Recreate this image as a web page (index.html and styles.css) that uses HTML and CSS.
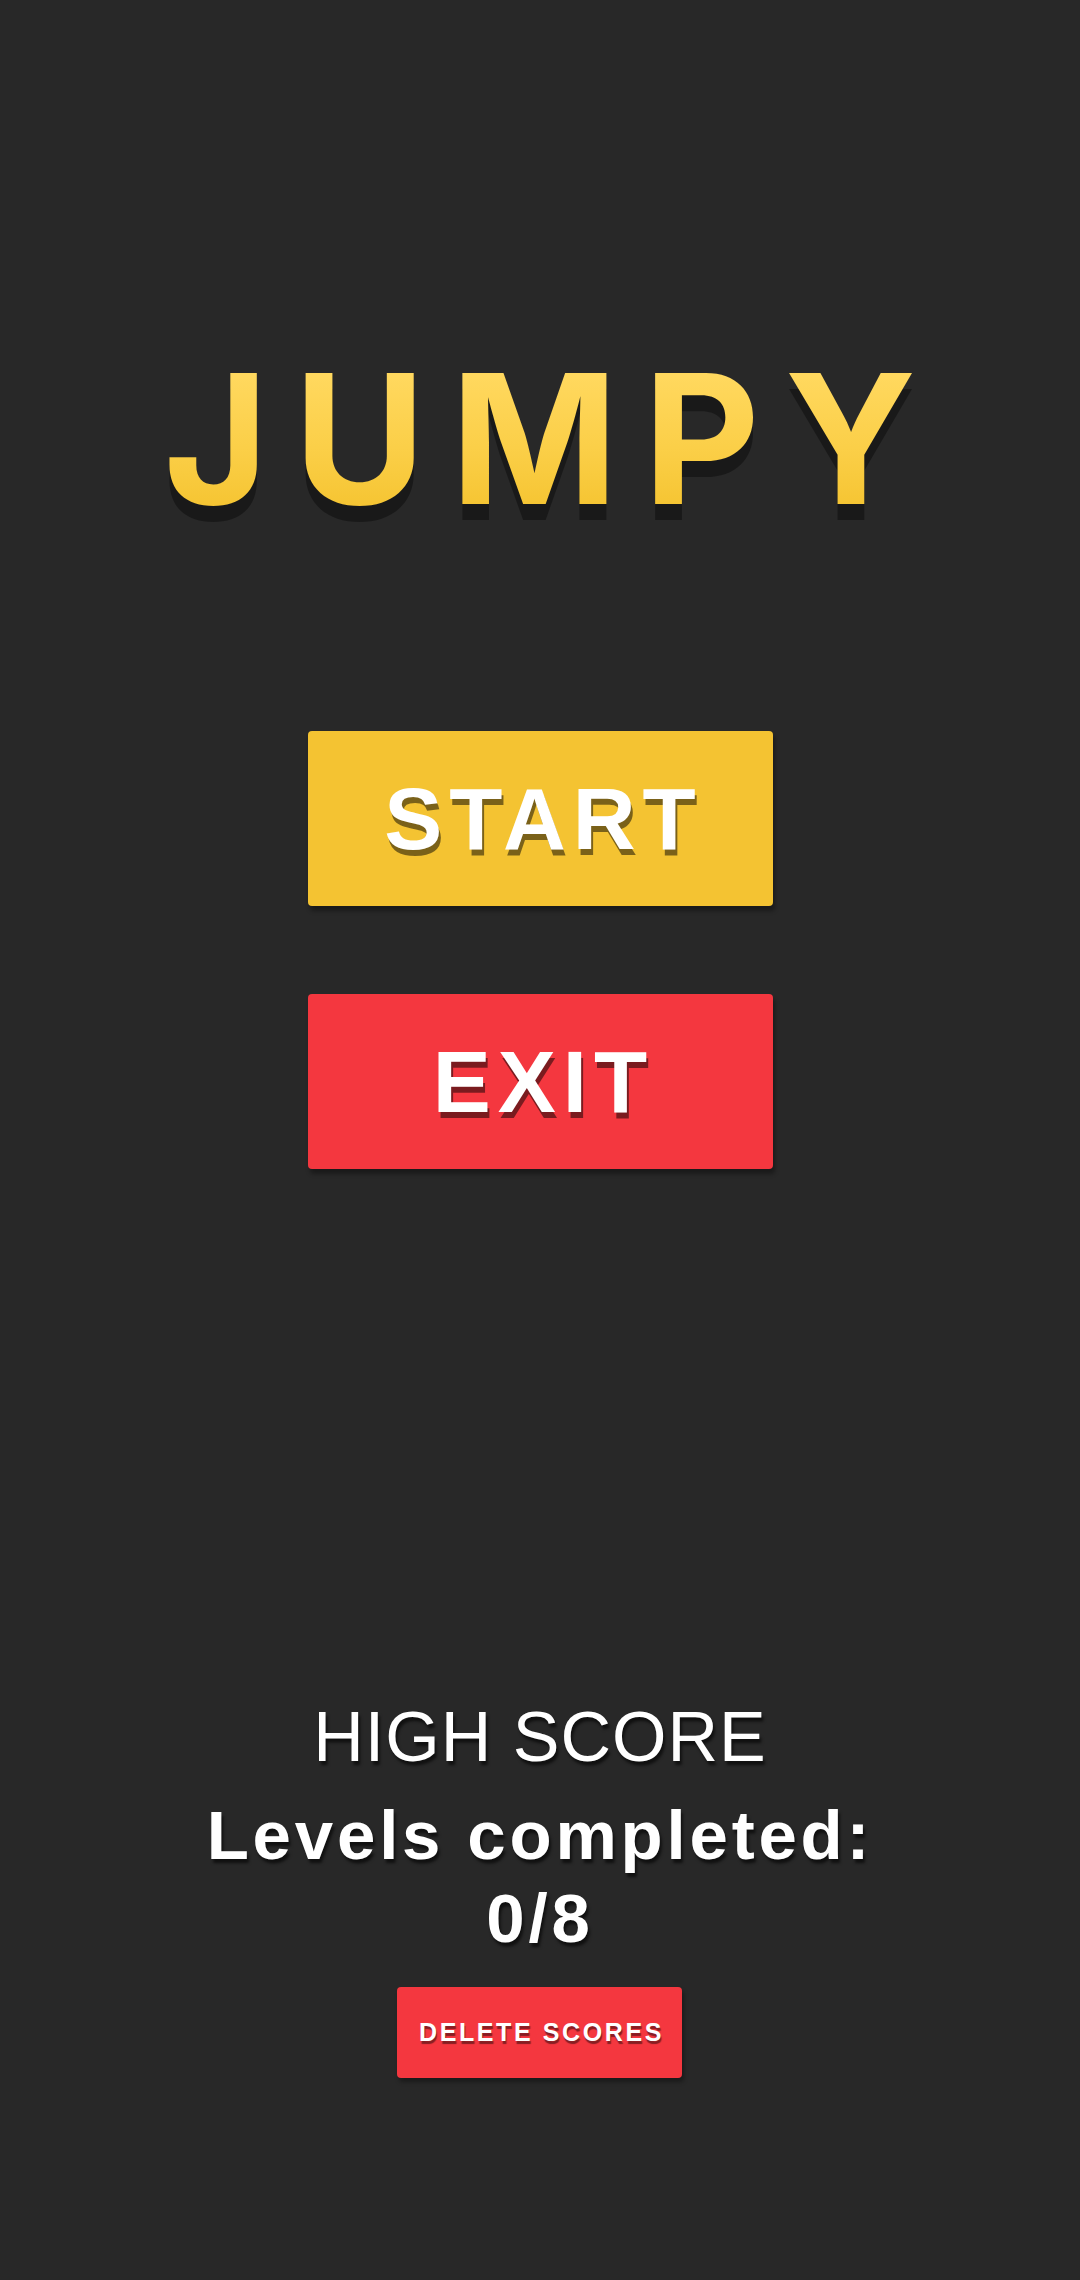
FILE: index.html
```html
<!DOCTYPE html>
<html lang="en">
<head>
<meta charset="utf-8">
<title>Jumpy</title>
<link rel="stylesheet" href="styles.css">
</head>
<body>
<main class="menu">
  <h1 class="title">JUMPY</h1>
  <button class="btn btn-start" type="button">START</button>
  <button class="btn btn-exit" type="button">EXIT</button>
  <section class="scores">
    <div class="high">HIGH SCORE</div>
    <div class="levels">Levels completed:<br>0/8</div>
    <button class="btn-delete" type="button">DELETE SCORES</button>
  </section>
</main>
</body>
</html>
```
FILE: styles.css
```css
html, body {
  margin: 0;
  padding: 0;
  background: #282828;
}
body {
  width: 1080px;
  height: 2280px;
  overflow: hidden;
}
.menu {
  display: flex;
  flex-direction: column;
  align-items: center;
}
.title {
  margin: 349px 0 0 0;
  padding-left: 25px;
  font-family: Inter, Roboto, sans-serif;
  font-weight: 700;
  font-size: 180px;
  line-height: 180px;
  height: 180px;
  letter-spacing: 25px;
  background: linear-gradient(180deg, #ffd85e 15%, #fbcf48 55%, #f5c431 90%);
  -webkit-background-clip: text;
  background-clip: text;
  color: transparent;
  filter: drop-shadow(0 16px 0 #191919);
}
.btn {
  display: flex;
  align-items: center;
  justify-content: center;
  width: 465px;
  height: 175px;
  border: 0;
  border-radius: 4px;
  padding: 0 0 0 7px;
  font-family: "Liberation Sans", Arial, sans-serif;
  font-weight: 700;
  font-size: 87px;
  line-height: 1;
  letter-spacing: 7px;
  color: #ffffff;
  text-shadow: 2px 6px 0 rgba(0, 0, 0, 0.5);
  box-shadow: 2px 5px 4px rgba(0, 0, 0, 0.35);
}
.btn-start {
  margin-top: 202px;
  background: #f4c332;
}
.btn-exit {
  margin-top: 88px;
  background: #f4373f;
}
.scores {
  margin-top: 533px;
  display: flex;
  flex-direction: column;
  align-items: center;
  font-family: "Liberation Sans", Arial, sans-serif;
  color: #ffffff;
  text-align: center;
}
.high {
  font-size: 70px;
  line-height: 70px;
  letter-spacing: 1px;
  text-shadow: 2px 4px 3px rgba(0, 0, 0, 0.6);
}
.levels {
  margin-top: 22px;
  font-size: 69px;
  font-weight: 700;
  line-height: 83px;
  letter-spacing: 3.8px;
  text-shadow: 2px 4px 3px rgba(0, 0, 0, 0.6);
}
.btn-delete {
  margin-top: 27px;
  width: 285px;
  height: 91px;
  border: 0;
  border-radius: 4px;
  padding: 0 0 0 3px;
  background: #f4373f;
  font-family: "Liberation Sans", Arial, sans-serif;
  font-weight: 700;
  font-size: 25px;
  line-height: 1;
  letter-spacing: 2.6px;
  color: #ffffff;
  text-shadow: 1px 3px 1px rgba(0, 0, 0, 0.45);
  box-shadow: 2px 4px 4px rgba(0, 0, 0, 0.35);
}
```
